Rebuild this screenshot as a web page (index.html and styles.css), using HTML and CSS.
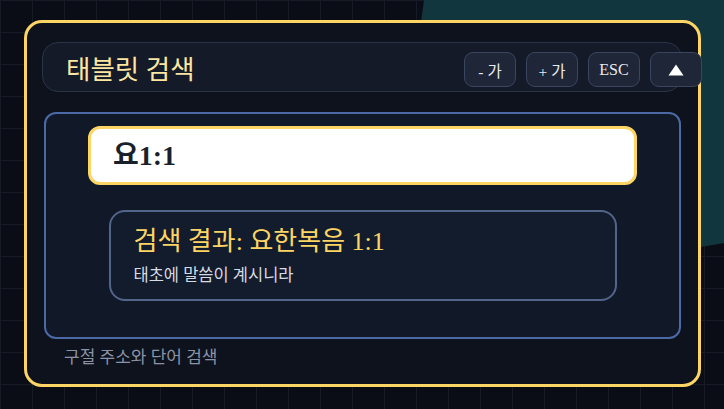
FILE: index.html
```html
<!DOCTYPE html>
<html lang="ko">
<head>
<meta charset="utf-8">
<title>태블릿 검색</title>
<link rel="stylesheet" href="styles.css">
</head>
<body>
<div class="backdrop"></div>
<main class="panel">
  <header class="bar">
    <h1 class="bar-title">태블릿 검색</h1>
    <div class="bar-actions">
      <button class="btn">- 가</button>
      <button class="btn">+ 가</button>
      <button class="btn btn-esc">ESC</button>
      <button class="btn" aria-label="위로">
        <svg width="16" height="12" viewBox="0 0 16 12"><polygon points="8,0.5 15.5,11.5 0.5,11.5" fill="#ffffff"/></svg>
      </button>
    </div>
  </header>

  <section class="search">
    <div class="query">요1:1</div>
    <article class="result">
      <h2 class="result-title">검색 결과: 요한복음 1:1</h2>
      <p class="result-text">태초에 말씀이 계시니라</p>
    </article>
  </section>

  <p class="hint">구절 주소와 단어 검색</p>
</main>
</body>
</html>
```
FILE: styles.css
```css
html, body {
  margin: 0;
  padding: 0;
}

body {
  width: 724px;
  height: 409px;
  overflow: hidden;
  position: relative;
  font-family: "Liberation Serif", "Noto Sans CJK KR", serif;
  background-color: #0a0d15;
  background-image:
    linear-gradient(90deg, #151b27 1px, transparent 1px),
    linear-gradient(180deg, #151b27 1px, transparent 1px);
  background-size: 32px 32px;
}

/* tilted teal sheet behind the panel */
.backdrop {
  position: absolute;
  inset: 0;
  background: #12363d;
  clip-path: polygon(424px 0, 724px 0, 724px 243px, 383px 302px);
}

.panel {
  position: relative;
  box-sizing: border-box;
  width: 677px;
  height: 367px;
  margin: 20px 0 0 24px;
  border: 3px solid #fcd564;
  border-radius: 18px;
  background: #0e121d;
  display: flex;
  flex-direction: column;
}

.bar {
  box-sizing: border-box;
  width: 640px;
  height: 50px;
  margin: 19px 0 0 15px;
  padding: 5px 0 0 23px;
  border: 1px solid #2a3447;
  border-radius: 16px;
  background: #141a28;
  display: flex;
  align-items: center;
  justify-content: space-between;
}

.bar-title {
  margin: 0;
  font-size: 26.5px;
  font-weight: 400;
  line-height: 34px;
  color: #fbe6a2;
}

.bar-actions {
  display: flex;
  gap: 10px;
  margin-right: -21px;
}

.btn {
  box-sizing: border-box;
  width: 52px;
  height: 35px;
  padding: 0;
  border: 1px solid #3a4660;
  border-radius: 9px;
  background: #1f2638;
  color: #e8eaef;
  font-family: "Liberation Serif", "Noto Sans CJK KR", serif;
  font-size: 15.5px;
  display: flex;
  align-items: center;
  justify-content: center;
}

.btn-esc {
  font-size: 16px;
}

.search {
  box-sizing: border-box;
  width: 637px;
  height: 227px;
  margin: 20px 0 0 17px;
  padding-top: 12px;
  border: 2px solid #4a69a5;
  border-radius: 12px;
  background: #111827;
  display: flex;
  flex-direction: column;
  align-items: center;
}

.query {
  box-sizing: border-box;
  width: 549px;
  height: 59px;
  padding: 3px 0 0 22px;
  border: 3px solid #fcd564;
  border-radius: 12px;
  background: #ffffff;
  color: #1a1f2c;
  font-size: 28px;
  font-weight: 700;
  line-height: 48px;
}

.result {
  box-sizing: border-box;
  width: 508px;
  height: 91px;
  margin-top: 25px;
  padding: 12px 0 0 23px;
  border: 2px solid #53648a;
  border-radius: 16px;
  background: #131c2d;
}

.result-title {
  margin: 0;
  font-size: 26px;
  font-weight: 400;
  line-height: 36px;
  color: #fcd564;
}

.result-text {
  margin: 4px 0 0;
  font-size: 16.5px;
  line-height: 24px;
  color: #d7dbe3;
}

.hint {
  margin: 7px 0 0 37px;
  font-size: 17px;
  line-height: 24px;
  color: #8a93a6;
}
```
